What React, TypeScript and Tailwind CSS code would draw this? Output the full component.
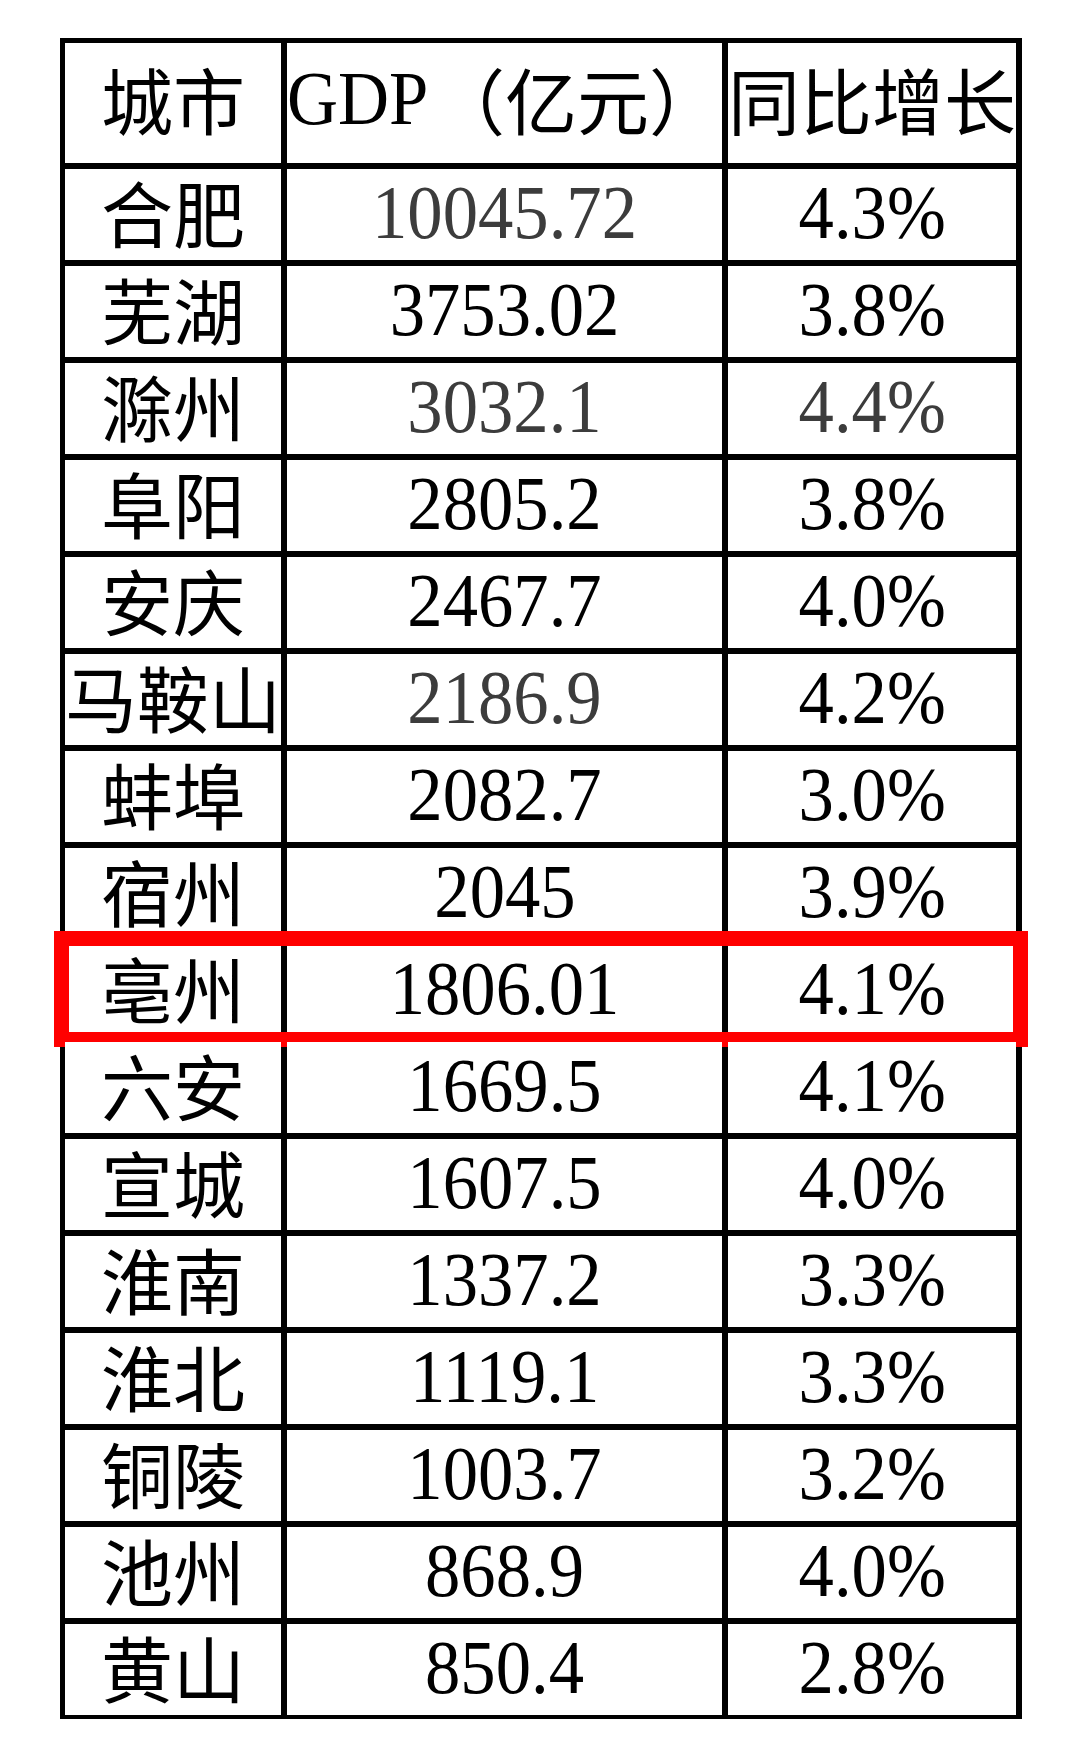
const rows = [
  { city: "合肥", gdp: "10045.72", growth: "4.3%", gray: true },
  { city: "芜湖", gdp: "3753.02", growth: "3.8%" },
  { city: "滁州", gdp: "3032.1", growth: "4.4%", gray: true },
  { city: "阜阳", gdp: "2805.2", growth: "3.8%" },
  { city: "安庆", gdp: "2467.7", growth: "4.0%" },
  { city: "马鞍山", gdp: "2186.9", growth: "4.2%", gray: true },
  { city: "蚌埠", gdp: "2082.7", growth: "3.0%" },
  { city: "宿州", gdp: "2045", growth: "3.9%" },
  { city: "亳州", gdp: "1806.01", growth: "4.1%", highlight: true },
  { city: "六安", gdp: "1669.5", growth: "4.1%" },
  { city: "宣城", gdp: "1607.5", growth: "4.0%" },
  { city: "淮南", gdp: "1337.2", growth: "3.3%" },
  { city: "淮北", gdp: "1119.1", growth: "3.3%" },
  { city: "铜陵", gdp: "1003.7", growth: "3.2%" },
  { city: "池州", gdp: "868.9", growth: "4.0%" },
  { city: "黄山", gdp: "850.4", growth: "2.8%" },
];

const cjk = "font-['Noto_Sans_CJK_SC',sans-serif] text-[72px] leading-none";
const serif =
  "font-['Liberation_Serif','Times_New_Roman','DejaVu_Serif',serif] text-[76px] leading-none scale-x-[0.93]";

export default function App() {
  return (
    <div className="w-[1080px] h-[1753px] bg-white pt-[38px] pl-[60px]">
      <div className="w-[962px] flex flex-col gap-y-[6px] bg-black p-[5px] pb-[4px]">
        {/* header */}
        <div className="grid grid-cols-[216px_435px_288px] gap-x-[6px] h-[120px]">
          <div className="bg-white flex items-center justify-center pb-[10px]">
            <span className={`${cjk} text-black`}>城市</span>
          </div>
          <div className="bg-white flex items-center justify-start pb-[10px] whitespace-nowrap overflow-visible">
            <span className={`${serif} text-black origin-left inline-block`}>GDP</span>
            <span className={`${cjk} text-black -ml-[6px]`}>（亿元）</span>
          </div>
          <div className="bg-white flex items-center justify-start pb-[10px] whitespace-nowrap">
            <span className={`${cjk} text-black`}>同比增长</span>
          </div>
        </div>

        {rows.map((r) => (
          <div
            key={r.city}
            className="relative grid grid-cols-[216px_435px_288px] gap-x-[6px] h-[91px]"
          >
            <div className="bg-white flex items-center justify-center pb-[8px] whitespace-nowrap">
              <span className={`${cjk} text-black`}>{r.city}</span>
            </div>
            <div className="bg-white flex items-center justify-center pb-[6px]">
              <span className={`${serif} inline-block ${r.gray ? "text-[#3c3c3c]" : "text-black"}`}>
                {r.gdp}
              </span>
            </div>
            <div className="bg-white flex items-center justify-center pb-[6px]">
              <span className={`${serif} inline-block ${r.gray && r.city === "滁州" ? "text-[#3c3c3c]" : "text-black"}`}>
                {r.growth}
              </span>
            </div>
            {r.highlight && (
              <div className="absolute -top-[14px] -bottom-[11px] -left-[11px] -right-[11px] border-[15px] border-[#ff0000] pointer-events-none" />
            )}
          </div>
        ))}
      </div>
    </div>
  );
}
